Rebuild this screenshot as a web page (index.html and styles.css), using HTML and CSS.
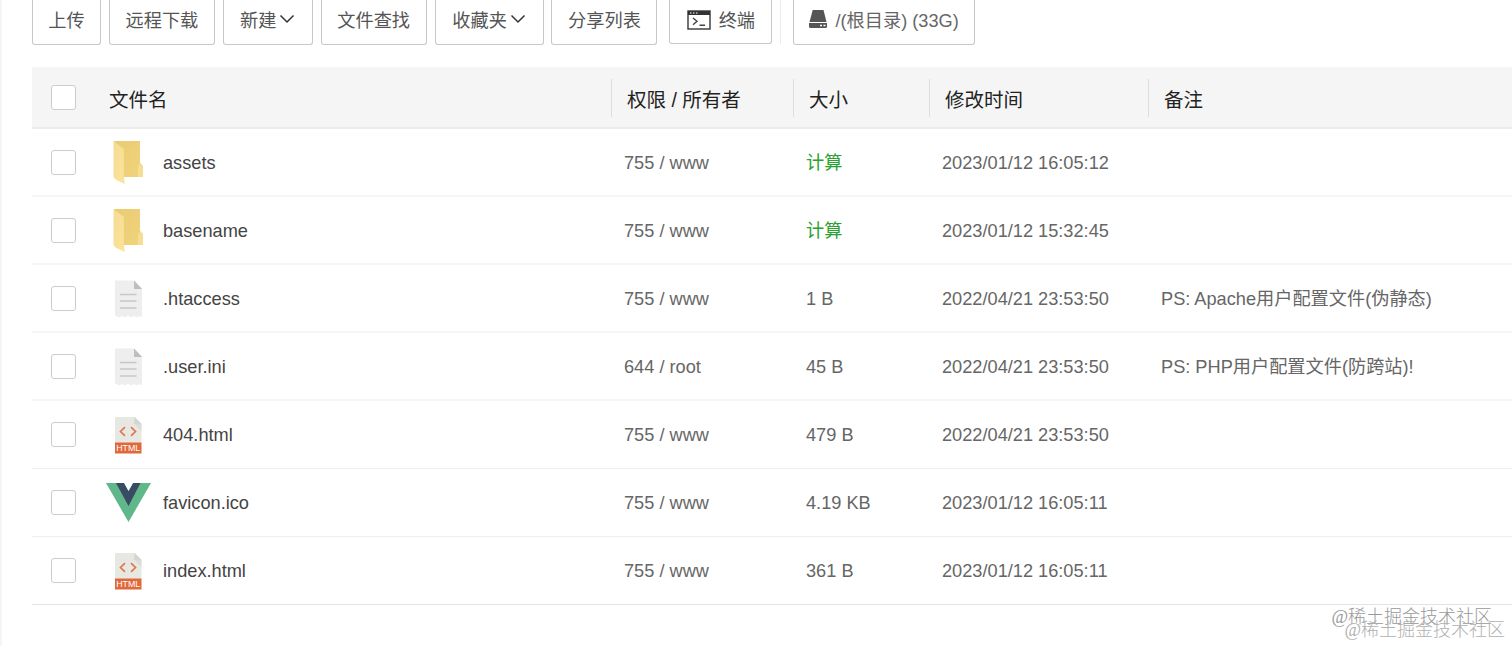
FILE: index.html
```html
<!DOCTYPE html>
<html lang="zh-CN">
<head>
<meta charset="utf-8">
<title>文件</title>
<link rel="stylesheet" href="styles.css">
</head>
<body>
<svg class="defs" width="0" height="0" aria-hidden="true">
  <defs>
    <linearGradient id="back" x1="0" y1="0" x2="1" y2="1"><stop offset="0" stop-color="#e9cb73"/><stop offset="1" stop-color="#f0d47c"/></linearGradient>
    <linearGradient id="flap" x1="0" y1="0" x2="1" y2="1"><stop offset="0" stop-color="#f5dc94"/><stop offset="1" stop-color="#fbe39a"/></linearGradient>
    <symbol id="folder" viewBox="0 0 46 46">
      <path d="M9 2h26v22l3 3v11H18z" fill="url(#back)"/>
      <path d="M35 24l3 3v11h-5V28z" fill="#f6dd94"/>
      <path d="M8.500 2L18.800 10V37.500l1 7.500L10.500 40.500 8.500 38z" fill="url(#flap)"/>
    </symbol>
    <symbol id="file" viewBox="0 0 46 46">
      <path d="M10 5.500h19l8 8v29l-2-1.500-3 1.500-3-1.500-3 1.500-3-1.500-3 1.500-3-1.500-3 1.500-4-2z" fill="#eeeeee"/>
      <path d="M29 5.500l8 8.500h-8z" fill="#bebebe"/>
      <path d="M15 19.500h16.500M15 26h16.500M15 33h16.500" stroke="#c8c8c8" stroke-width="1.700" fill="none"/>
    </symbol>
    <symbol id="html" viewBox="0 0 46 46">
      <path d="M11 5h18.500l7 7v20H10V6q0-1 1-1z" fill="#e8e8e2"/>
      <path d="M29.500 5l7 7v7l-8-8z" fill="#dcddd8"/>
      <path d="M29.500 5l7 7h-6q-1 0-1-1z" fill="#d5d6d1"/>
      <path d="M20 15.200l-4.500 4.300 4.500 4.300M26 15.200l4.500 4.300-4.500 4.300" stroke="#e0764b" stroke-width="1.700" fill="none"/>
      <path d="M10 30.500h26.500V41.500H10z" fill="#df693a"/>
      <text x="23.200" y="39.300" class="html-label">HTML</text>
    </symbol>
    <symbol id="vue" viewBox="0 0 46 46">
      <path d="M1 3h45L23.500 42z" fill="#5fb78a"/>
      <path d="M11 3h8.500l4 8 4.500-8h7.500L23.500 26z" fill="#394a63"/>
      <path d="M19 3h9L23.500 11z" fill="#fff"/>
    </symbol>
    <symbol id="chevron" viewBox="0 0 16 10"><path d="M1.500 1.500L8 8l6.500-6.500" fill="none" stroke="#333" stroke-width="1.500"/></symbol>
  </defs>
</svg>
<main class="page">
  <nav class="toolbar">
    <button class="btn w69">上传</button>
    <button class="btn w106">远程下载</button>
    <button class="btn w90">新建<svg class="chevron"><use href="#chevron"/></svg></button>
    <button class="btn w106">文件查找</button>
    <button class="btn w109">收藏夹<svg class="chevron"><use href="#chevron"/></svg></button>
    <button class="btn w106">分享列表</button>
    <button class="btn terminal">
      <svg class="term-icon" viewBox="0 0 24 20"><path d="M1 1h22v18H1z" fill="none" stroke="#444" stroke-width="1.500"/><path d="M1 1h22v4H1z" fill="#333"/><path d="M3 3h1.500M6 3h1.500M9 3h1.500" stroke="#fff" stroke-width="1.200"/><path d="M6 8l4 3.300-4 3.500M12.500 15.200H18" fill="none" stroke="#444" stroke-width="1.400"/></svg>终端
    </button>
    <span class="divider"></span>
    <button class="btn disk">
      <svg class="disk-icon" viewBox="0 0 18 18"><path d="M3.700 0h10.800L17.500 12H.5z" fill="#555"/><path d="M0 13h18v3.500q0 1.500-1.500 1.500h-15Q0 18 0 16.500z" fill="#555"/><path d="M11 15.500h2M14.500 15.500h2" stroke="#fff" stroke-width="1.400"/></svg>/(根目录) (33G)
    </button>
  </nav>
  <section class="table">
    <div class="row head">
      <div class="name"><i class="check"></i><span>文件名</span></div>
      <div>权限 / 所有者</div><div>大小</div><div>修改时间</div><div>备注</div>
    </div>
    <div class="row"><div class="name"><i class="check"></i><svg class="icon"><use href="#folder"/></svg><span>assets</span></div><div>755 / www</div><div class="cjk calc">计算</div><div>2023/01/12 16:05:12</div><div></div></div>
    <div class="row"><div class="name"><i class="check"></i><svg class="icon"><use href="#folder"/></svg><span>basename</span></div><div>755 / www</div><div class="cjk calc">计算</div><div>2023/01/12 15:32:45</div><div></div></div>
    <div class="row"><div class="name"><i class="check"></i><svg class="icon"><use href="#file"/></svg><span>.htaccess</span></div><div>755 / www</div><div>1 B</div><div>2022/04/21 23:53:50</div><div class="cjk">PS: Apache用户配置文件(伪静态)</div></div>
    <div class="row"><div class="name"><i class="check"></i><svg class="icon"><use href="#file"/></svg><span>.user.ini</span></div><div>644 / root</div><div>45 B</div><div>2022/04/21 23:53:50</div><div class="cjk">PS: PHP用户配置文件(防跨站)!</div></div>
    <div class="row thin"><div class="name"><i class="check"></i><svg class="icon"><use href="#html"/></svg><span>404.html</span></div><div>755 / www</div><div>479 B</div><div>2022/04/21 23:53:50</div><div></div></div>
    <div class="row thin"><div class="name"><i class="check"></i><svg class="icon"><use href="#vue"/></svg><span>favicon.ico</span></div><div>755 / www</div><div>4.19 KB</div><div>2023/01/12 16:05:11</div><div></div></div>
    <div class="row last"><div class="name"><i class="check"></i><svg class="icon"><use href="#html"/></svg><span>index.html</span></div><div>755 / www</div><div>361 B</div><div>2023/01/12 16:05:11</div><div></div></div>
  </section>
  <span class="mark mark-a">@稀土掘金技术社区</span>
  <span class="mark mark-b">@稀土掘金技术社区</span>
</main>
</body>
</html>
```

FILE: styles.css
```css
* { box-sizing: border-box; }
body { margin: 0; background: #fff; font-family: "Liberation Sans", "Noto Sans CJK SC", sans-serif; font-size: 18.2px; color: #666; }
.defs { position: absolute; }
.page { position: relative; height: 646px; overflow: hidden; border-left: 2px solid #f5f5f5; padding-left: 30px; }
.toolbar { display: flex; height: 45px; gap: 7.9px; align-items: flex-start; }
.btn { display: flex; align-items: center; justify-content: center; flex: none; height: 45px; padding: 0 0 6px; border: 1px solid #c8c8c8; border-top: 0; border-radius: 0 0 3px 3px; background: #fff; color: #555; font: inherit; white-space: nowrap; }
.w69 { width: 69px; }
.w106 { width: 106px; }
.w90 { width: 90px; }
.w109 { width: 109px; }
.chevron { width: 16px; height: 10px; margin-left: 3px; }
.terminal { width: 103px; height: 44px; margin-left: 4px; gap: 8px; padding-bottom: 5px; }
.term-icon { width: 24px; height: 20px; margin-top: 1px; }
.divider { width: 1px; height: 44px; background: #ececec; }
.disk { width: 182px; margin-left: 4px; gap: 8px; color: #666; }
.disk-icon { width: 18px; height: 18px; margin-top: -1px; }
.table { margin-top: 22px; }
.row { display: grid; grid-template-columns: 579px 182px 136px 219px 1fr; align-items: center; height: 68px; border-bottom: 2px solid #f6f6f6; }
.row > div { padding: 2px 0 0 13px; white-space: nowrap; }
.row > .cjk { padding: 0 0 2px 13px; }
.row > .name { display: flex; align-items: center; padding: 0 0 0 19px; color: #444; }
.name span { padding-top: 2px; }
.check { flex: none; width: 25px; height: 25px; border: 1.500px solid #ccc; border-radius: 3px; background: #fff; }
.icon { flex: none; width: 46px; height: 46px; margin: 0 12px 0 29px; }
.thin { border-bottom: 1px solid #eee; }
.last { border-bottom: 1px solid #e2e2e2; }
.row.head { height: 62px; background: #f5f5f5; border-bottom: 2px solid #ececec; color: #222; font-size: 19.500px; }
.row.head > div { display: flex; align-items: center; height: 38px; margin-top: 2px; padding: 0 0 0 15px; border-left: 1px solid #ddd; }
.row.head > .name { padding-left: 19px; color: #222; border-left: 0; }
.head .name span { margin-left: 33px; padding: 0; }
.head .check { margin-top: -2px; }
.row .calc { color: #2ba12f; }
.html-label { font: 8.800px "Liberation Sans", sans-serif; fill: #fff; text-anchor: middle; }
.mark { position: absolute; font: 300 18px/20px "Liberation Serif", "Noto Sans CJK SC", sans-serif; white-space: nowrap; }
.mark-a { right: 20px; top: 607px; color: #999; }
.mark-b { right: 7px; top: 620px; color: #b0b0b0; }
```
